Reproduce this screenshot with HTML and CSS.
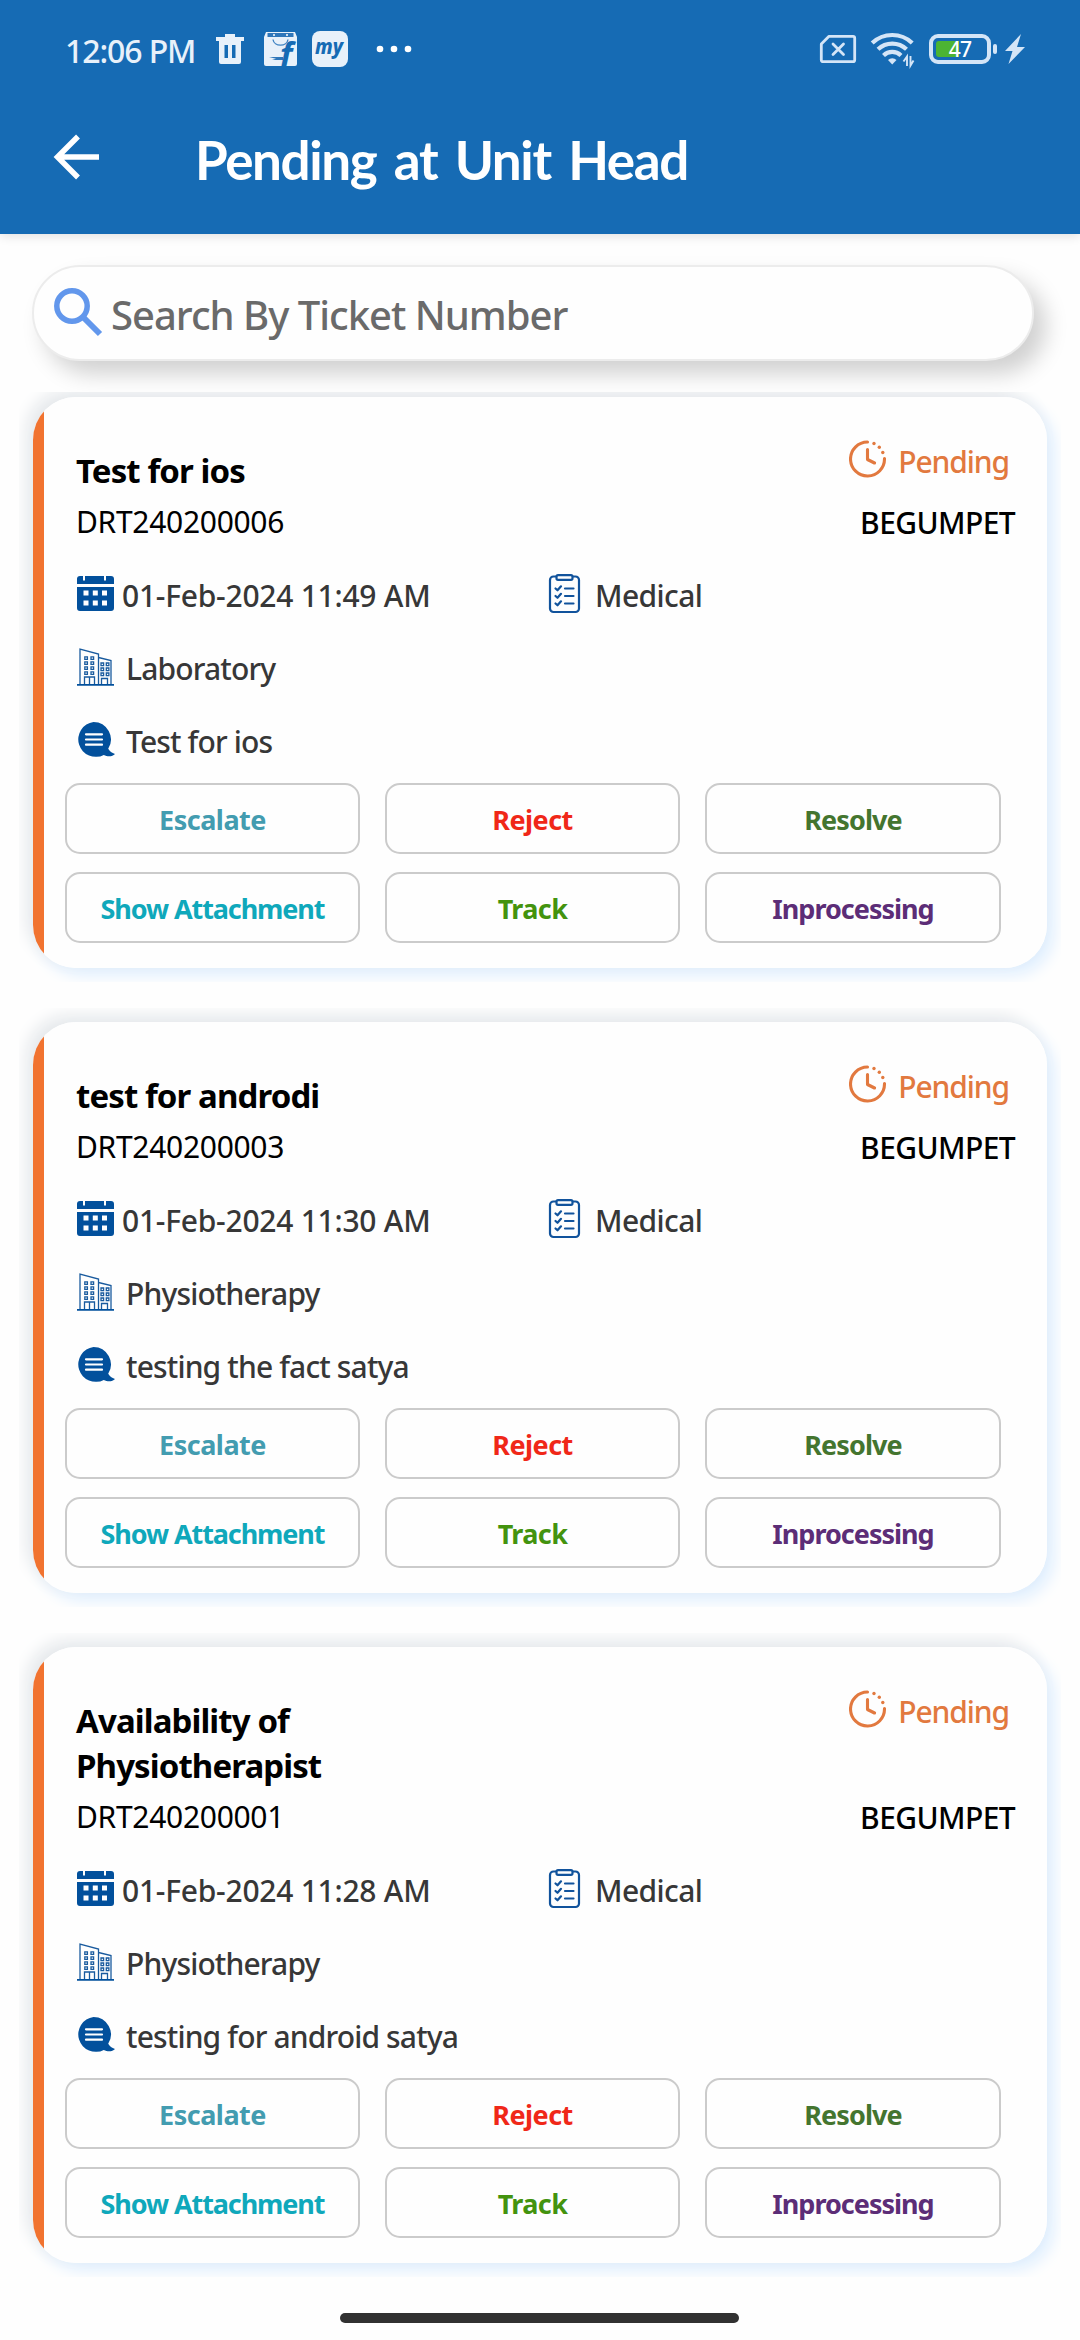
FILE: index.html
```html
<!DOCTYPE html>
<html lang="en">
<head>
<meta charset="utf-8">
<title>Pending at Unit Head</title>
<link rel="stylesheet" href="styles.css">
</head>
<body>
<svg class="sprite" aria-hidden="true">
  <symbol id="calendar" viewBox="0 0 42 41">
    <path fill="#02509c" d="M4 1h3v4.500h2V1h19v4.500h2V1h5a3 3 0 0 1 3 3v5H1V4a3 3 0 0 1 3-3zM1 12h37v21a3 3 0 0 1-3 3H4a3 3 0 0 1-3-3z"/>
    <path fill="#fff" d="M7.500 15.500h5v5h-5zM16.800 15.500h5v5h-5zM26 15.500h5v5h-5zM7.500 25.500h5v5h-5zM16.800 25.500h5v5h-5zM26 25.500h5v5h-5z"/>
  </symbol>
  <symbol id="building" viewBox="0 0 42 41">
    <path fill="none" stroke="#1a5b9e" stroke-width="1.300" d="M4 36.500V1l18.500 5v30.500M22.500 9.500L35 12.500v24M8.500 36.500v-7.500h10v7.500M13.500 29v7.500M25.500 36.500v-6h6v6"/>
    <path stroke="#02509c" stroke-width="1.800" d="M1 36.800h37"/>
    <path fill="none" stroke="#1a5b9e" stroke-width="1.300" d="M8.800 8.800h2.600v2.600H8.800zM15 8.800h2.600v2.600H15zM8.800 13.800h2.600v2.600H8.800zM15 13.800h2.600v2.600H15zM8.800 18.800h2.600v2.600H8.800zM15 18.800h2.600v2.600H15zM8.800 23.800h2.600v2.600H8.800zM15 23.800h2.600v2.600H15zM25 15h2.600v2.600H25zM30.300 15h2.600v2.600h-2.600zM25 20h2.600v2.600H25zM30.300 20h2.600v2.600h-2.600zM25 25h2.600v2.600H25zM30.300 25h2.600v2.600h-2.600z"/>
  </symbol>
  <symbol id="comment" viewBox="0 0 42 41">
    <path fill="#02509c" d="M17.500 1a17.500 17.500 0 0 1 14.700 26.800c1.600 2.600 3.600 4 6.800 5.200-2.700 2.800-7.500 2.900-11.200.9A17.500 17.500 0 1 1 17.500 1z"/>
    <path stroke="#fff" stroke-width="2.200" stroke-linecap="round" d="M10 13.300h16M10 18.500h16M10 23.700h16"/>
  </symbol>
  <symbol id="checklist" viewBox="0 0 34 41">
    <g fill="none" stroke="#11539c" stroke-width="2.200" stroke-linecap="round" stroke-linejoin="round">
      <path d="M8 2.500H5.500a3.500 3.500 0 0 0-3.500 3.500v28.500a3.500 3.500 0 0 0 3.500 3.500h22a3.500 3.500 0 0 0 3.500-3.500V6a3.500 3.500 0 0 0-3.500-3.500H25"/>
      <rect x="8.500" y="1.200" width="16" height="4.600" rx="1.500"/>
      <path d="M7.500 14.500l2 1.800 3.500-4M7.500 22l2 1.800 3.500-4M7.500 29.500l2 1.800 3.500-4M17 14.500h8.500M17 22h8.500M17 29.500h8.500"/>
    </g>
  </symbol>
  <symbol id="clock" viewBox="0 0 38 38">
    <g fill="none" stroke="#e2793f" stroke-width="3.100" stroke-linecap="round" stroke-linejoin="round">
      <path d="M18.500 2A17 17 0 1 0 35.500 18.500M18.500 9.500v10l7 3.500"/>
    </g>
    <g fill="#e2793f"><circle cx="25" cy="3.500" r="1.700"/><circle cx="30.300" cy="7.300" r="1.700"/><circle cx="33.800" cy="12.500" r="1.700"/></g>
  </symbol>
</svg>

<header class="appbar">
  <div class="status">
    <span class="time">12:06 PM</span>
    <svg class="trash" width="28" height="30" viewBox="0 0 28 30"><path fill="#e8f1fa" fill-rule="evenodd" d="M9 0h10v3h9v4h-3v21a2 2 0 0 1-2 2H5a2 2 0 0 1-2-2V7H0V3h9zM8.500 11v13H12V11zM16 11v13h3.500V11z"/></svg>
    <svg class="bag" width="33" height="34" viewBox="0 0 33 34"><path fill="#e8f1fa" d="M2 0h29l2 5v27a2 2 0 0 1-2 2H2a2 2 0 0 1-2-2V5z"/><path fill="#2f77ba" d="M3.500 1h26v4h-26z"/><circle cx="10" cy="3" r="1" fill="#fff"/><circle cx="23" cy="3" r="1" fill="#fff"/><path fill="none" stroke="#3f83c2" stroke-width="1.400" d="M9 7.500c1 7.500 14 7.500 15 0"/><path fill="#2f77ba" d="M5 25h14v3H8l4-1.200z"/><text class="bag-letter" x="16" y="33.500">f</text></svg>
    <svg class="my" width="36" height="36" viewBox="0 0 36 36"><rect width="36" height="36" rx="8" fill="#e8f1fa"/><text class="my-text" x="3" y="23" textLength="28" lengthAdjust="spacingAndGlyphs">my</text></svg>
    <svg class="more" width="36" height="8" viewBox="0 0 36 8" fill="#fff"><circle cx="4" cy="4" r="3.300"/><circle cx="18" cy="4" r="3.300"/><circle cx="32" cy="4" r="3.300"/></svg>
    <svg class="sim" width="36" height="28" viewBox="0 0 36 28" fill="none" stroke="#d4e5f7" stroke-width="2.800"><path stroke-linejoin="round" d="M9 1.300h24a1.700 1.700 0 0 1 1.700 1.700v22a1.700 1.700 0 0 1-1.700 1.700H3A1.700 1.700 0 0 1 1.300 25V9z"/><path stroke-linecap="round" d="M13 9l10.500 10.500M23.500 9L13 19.500"/></svg>
    <svg class="wifi" width="43" height="34" viewBox="0 0 43 34" fill="none" stroke="#d4e5f7" stroke-width="4.200"><path d="M1.200 10a29 29 0 0 1 40 0M7 16.300a20.500 20.500 0 0 1 28.500 0M12.500 22.500a12.500 12.500 0 0 1 17.500 0"/><path fill="#d4e5f7" stroke="none" d="M17 27a6 6 0 0 1 8.500 0L21.200 31.500z"/><path stroke-width="1.900" d="M36 33v-9.500l-3.500 5M39.500 23v9.500l3-5"/></svg>
    <span class="battery"><span class="level"></span><span class="percent">47</span></span>
    <span class="nub"></span>
    <svg class="bolt" width="20" height="30" viewBox="0 0 20 30"><path fill="#d4e5f7" d="M16 0L0 17h7.500L3.500 30 20 13h-8z"/></svg>
  </div>
  <div class="titlebar">
    <svg width="46" height="46" viewBox="0 0 46 46" fill="none" stroke="#fff" stroke-width="5.500"><path d="M24 2.500L3.500 23 24 43.500M4 23h41"/></svg>
    <h1>Pending at Unit Head</h1>
  </div>
</header>

<div class="search">
  <svg width="50" height="50" viewBox="0 0 50 50" fill="none" stroke="#6297ec" stroke-width="5.500"><circle cx="19" cy="19" r="15.200"/><path stroke-width="6" d="M31 31l16 16"/></svg>
  <span>Search By Ticket Number</span>
</div>

<main class="list">
  <div class="shade"><article class="card">
    <div class="head">
      <div class="subject"><h2>Test for ios</h2><p>DRT240200006</p></div>
      <div class="side"><span class="state"><svg><use href="#clock"/></svg>Pending</span><span class="site">BEGUMPET</span></div>
    </div>
    <div class="info">
      <div class="row"><span class="when"><svg><use href="#calendar"/></svg>01-Feb-2024 11:49 AM</span><span class="kind"><svg><use href="#checklist"/></svg>Medical</span></div>
      <div class="row"><svg><use href="#building"/></svg>Laboratory</div>
      <div class="row"><svg><use href="#comment"/></svg>Test for ios</div>
    </div>
    <div class="actions"><button class="escalate">Escalate</button><button class="reject">Reject</button><button class="resolve">Resolve</button><button class="attach">Show Attachment</button><button class="track">Track</button><button class="process">Inprocessing</button></div>
  </article></div>

  <div class="shade"><article class="card">
    <div class="head">
      <div class="subject"><h2>test for androdi</h2><p>DRT240200003</p></div>
      <div class="side"><span class="state"><svg><use href="#clock"/></svg>Pending</span><span class="site">BEGUMPET</span></div>
    </div>
    <div class="info">
      <div class="row"><span class="when"><svg><use href="#calendar"/></svg>01-Feb-2024 11:30 AM</span><span class="kind"><svg><use href="#checklist"/></svg>Medical</span></div>
      <div class="row"><svg><use href="#building"/></svg>Physiotherapy</div>
      <div class="row"><svg><use href="#comment"/></svg>testing the fact satya</div>
    </div>
    <div class="actions"><button class="escalate">Escalate</button><button class="reject">Reject</button><button class="resolve">Resolve</button><button class="attach">Show Attachment</button><button class="track">Track</button><button class="process">Inprocessing</button></div>
  </article></div>

  <div class="shade"><article class="card">
    <div class="head">
      <div class="subject"><h2>Availability of Physiotherapist</h2><p>DRT240200001</p></div>
      <div class="side"><span class="state"><svg><use href="#clock"/></svg>Pending</span><span class="site">BEGUMPET</span></div>
    </div>
    <div class="info">
      <div class="row"><span class="when"><svg><use href="#calendar"/></svg>01-Feb-2024 11:28 AM</span><span class="kind"><svg><use href="#checklist"/></svg>Medical</span></div>
      <div class="row"><svg><use href="#building"/></svg>Physiotherapy</div>
      <div class="row"><svg><use href="#comment"/></svg>testing for android satya</div>
    </div>
    <div class="actions"><button class="escalate">Escalate</button><button class="reject">Reject</button><button class="resolve">Resolve</button><button class="attach">Show Attachment</button><button class="track">Track</button><button class="process">Inprocessing</button></div>
  </article></div>
</main>
<div class="home"></div>
</body>
</html>
```
FILE: styles.css
```css
* { box-sizing: border-box; }
body {
  margin: 0;
  width: 1080px;
  height: 2340px;
  overflow: hidden;
  display: flex;
  flex-direction: column;
  background: #fefefe;
  color: #373737;
  font-family: "Noto Sans", sans-serif;
  font-weight: 500;
}
h1, h2, p { margin: 0; font-weight: inherit; }
svg { display: block; flex: none; overflow: visible; }
.sprite { position: absolute; width: 0; height: 0; }

/* header */
.appbar {
  flex: none;
  height: 234px;
  background: #166bb4;
  box-shadow: 0 2px 10px rgba(0, 0, 0, .12);
}
.status {
  display: flex;
  align-items: center;
  height: 98px;
  padding-left: 65px;
  color: #e8f1fa;
}
.time { width: 151px; padding-top: 2px; font-size: 32px; letter-spacing: -1.1px; white-space: nowrap; }
.bag { margin-left: 20px; }
.my { margin-left: 15px; }
.more { margin-left: 28px; }
.sim { margin-left: 408px; }
.wifi { margin: 2px 0 0 15px; }
.bag-letter { font: italic 700 33px "Noto Sans", sans-serif; fill: #166bb4; }
.my-text { font: italic 800 21px "Noto Sans", sans-serif; fill: #166bb4; }
.battery {
  position: relative;
  width: 62px;
  height: 30px;
  margin-left: 15px;
  padding: 3px;
  border: 4px solid #d4e5f7;
  border-radius: 9px;
}
.level { display: block; width: 23px; height: 16px; border-radius: 3px 0 0 3px; background: #4cb432; }
.percent {
  position: absolute;
  inset: 0;
  font-size: 21px;
  line-height: 22px;
  letter-spacing: -.8px;
  text-align: center;
  color: #fff;
}
.nub { width: 4px; height: 10px; margin-left: 2px; border-radius: 2px; background: #d4e5f7; }
.bolt { margin-left: 8px; }
.titlebar { display: flex; align-items: center; height: 118px; padding-left: 54px; }
h1 {
  margin: 4px 0 0 95px;
  color: #fff;
  font: 700 53px Lato, sans-serif;
  letter-spacing: -1.4px;
  word-spacing: 6px;
}

/* search */
.search {
  display: flex;
  flex: none;
  align-items: center;
  width: 1002px;
  height: 96px;
  margin: 31px 0 31px 32px;
  padding-left: 19px;
  border: 2px solid #ececec;
  border-radius: 48px;
  background: #fefefe;
  box-shadow: 12px 13px 22px rgba(0, 0, 0, .18);
  color: #6a6a6a;
  font-size: 40px;
  letter-spacing: -1px;
}
.search svg { margin-bottom: 3px; }
.search span { margin: 2px 0 0 8px; }

/* ticket list */
.list {
  flex: none;
  height: 1894px;
  overflow: hidden;
  position: relative;
}
.shade {
  width: 1042px;
  margin: 0 0 26px 19px;
  padding: 14px;
  overflow: hidden;
}
.shade:first-child { margin-top: -9px; }
.card {
  padding: 45px 32px 25px;
  border-radius: 43px;
  background: linear-gradient(90deg, #f17330 11px, #fefefe 11px);
  box-shadow: -7px -7px 16px #e6e9ec, 7px 7px 16px #deeefe;
}
.head { display: flex; justify-content: space-between; padding-left: 11px; }
.subject { width: 300px; padding-top: 6px; color: #000; }
h2 { font-weight: 700; font-size: 33px; line-height: 45px; letter-spacing: -.9px; }
.subject p { margin-top: 8px; font-weight: 400; font-size: 30px; line-height: 41px; letter-spacing: -.3px; }
.side { display: flex; flex-direction: column; justify-content: space-between; align-items: flex-end; }
.state {
  display: flex;
  gap: 11px;
  margin-right: 6px;
  color: #e2793f;
  font-size: 30px;
  line-height: 40px;
  letter-spacing: -1.1px;
}
.state svg { width: 38px; height: 38px; margin-top: -2px; }
.site { color: #000; font-size: 30px; line-height: 39px; letter-spacing: -.6px; }
.info {
  display: flex;
  flex-direction: column;
  gap: 32px;
  padding: 33px 0 21px 11px;
  font-size: 30px;
  line-height: 41px;
  letter-spacing: -.85px;
}
.row, .when, .kind { display: flex; }
.row svg { width: 42px; height: 41px; margin-right: 8px; }
.when { width: 472px; letter-spacing: -.25px; }
.when svg { margin-right: 4px; }
.kind { letter-spacing: -.6px; }
.kind svg { width: 34px; margin: -1px 13px 0 0; }
.actions { display: grid; grid-template-columns: 295px 295px 296px; gap: 18px 25px; }
.actions button {
  height: 71px;
  padding: 2px 0 0;
  border: 2px solid #cbcbcb;
  border-radius: 15px;
  background: #fefefe;
  font: 700 27px "Noto Sans", sans-serif;
  letter-spacing: -1.1px;
}
.actions .escalate { color: #439cb0; letter-spacing: -.5px; }
.actions .reject { color: #f02718; letter-spacing: -.5px; }
.actions .resolve { color: #44752f; letter-spacing: -.9px; }
.actions .attach { color: #0fa8bb; }
.actions .track { color: #43930e; letter-spacing: -.6px; }
.actions .process { color: #5c2d77; letter-spacing: -1px; }

/* gesture bar */
.home {
  flex: none;
  width: 399px;
  height: 10px;
  margin: 27px 0 0 340px;
  border-radius: 5px;
  background: #313131;
}
```
